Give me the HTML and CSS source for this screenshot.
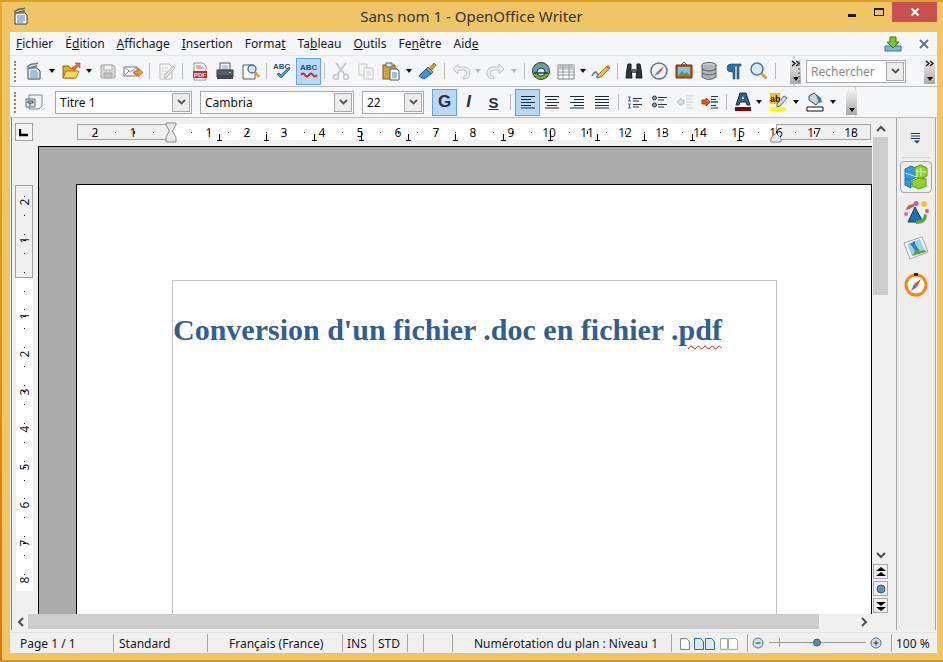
FILE: index.html
```html
<!DOCTYPE html>
<html lang="fr">
<head>
<meta charset="utf-8">
<title>Sans nom 1 - OpenOffice Writer</title>
<link rel="stylesheet" href="styles.css">
</head>
<body>
<div class="window">
  <header class="titlebar">
    <div class="app-icon">
      <svg width="16" height="18" viewBox="0 0 16 18"><path d="M2 6h10l2 2v9H2z" fill="#fff" stroke="#2b3a4a"/><path d="M4 9h8M4 11h8M4 13h8M4 15h6" stroke="#3b7fc4"/><path d="M1 5q5-4 9-3l2-1M2 7q5-3 10-3" fill="none" stroke="#5a6a78" stroke-width="1.5"/></svg>
    </div>
    <div class="title">Sans nom 1 - OpenOffice Writer</div>
    <div class="controls">
      <span class="ctl-min"></span>
      <span class="ctl-max"></span>
      <span class="ctl-close"><svg width="10" height="10" viewBox="0 0 10 10"><path d="M1.5 1.5l7 7M8.5 1.5l-7 7" stroke="#fff" stroke-width="2"/></svg></span>
    </div>
  </header>

  <div class="client">
    <nav class="menubar">
      <span><u>F</u>ichier</span><span>É<u>d</u>ition</span><span><u>A</u>ffichage</span><span><u>I</u>nsertion</span><span>Forma<u>t</u></span><span>Ta<u>b</u>leau</span><span><u>O</u>utils</span><span>Fe<u>n</u>être</span><span>Aid<u>e</u></span>
      <div class="menu-right">
        <svg width="18" height="16" viewBox="0 0 18 16"><path d="M1 10h16v5H1z" fill="#7fb2dd" stroke="#3d6f9a"/><path d="M6 1h6v5h3l-6 6-6-6h3z" fill="#7cc22e" stroke="#3f7f12"/></svg>
        <svg class="doc-close" width="10" height="10" viewBox="0 0 10 10"><path d="M1 1l8 8M9 1l-8 8" stroke="#6b7680" stroke-width="2"/></svg>
      </div>
    </nav>

    <div class="toolbar">
      <div class="tb-main">
        <i class="grip"></i>
        <button class="ic"><svg width="20" height="20" viewBox="0 0 20 20"><path d="M4 7h9l3 3v8H4z" fill="#fff" stroke="#2b3a4a"/><path d="M6 10h7M6 12h8M6 14h8M6 16h8" stroke="#3b7fc4"/><path d="M3 6q5-4 9-3l2-1M4 8q5-3 9-3" fill="none" stroke="#6d7a86" stroke-width="1.5"/></svg></button>
        <button class="dd"><b></b></button>
        <button class="ic"><svg width="20" height="20" viewBox="0 0 20 20"><path d="M2 5h6l1 2h5v10H2z" fill="#e9a92c" stroke="#8f6410"/><path d="M2 17l3-7h13l-3 7z" fill="#fbd55c" stroke="#a87a14"/><path d="M11 7l5-4-2-1h5v5l-1.500-2-4 4z" fill="#ee6b2a" stroke="#b3431a" stroke-width=".6"/></svg></button>
        <button class="dd"><b></b></button>
        <button class="ic off"><svg width="20" height="20" viewBox="0 0 20 20"><path d="M3 4h12l2 2v11H3z" fill="#d8d8d8" stroke="#9a9a9a"/><path d="M6 4h8v5H6z" fill="#f2f2f2" stroke="#a8a8a8"/><path d="M6 12h8v5H6z" fill="#bcbcbc" stroke="#a0a0a0"/></svg></button>
        <button class="ic"><svg width="22" height="20" viewBox="0 0 22 20"><path d="M2 6h13v9H2z" fill="#fdfdfd" stroke="#6a7580"/><path d="M2 6l6.500 5L15 6M2 15l5-5M15 15l-4-4" fill="none" stroke="#8b95a0"/><path d="M12 10h4V7l5 4.500L16 16v-3h-4z" fill="#f0a12b" stroke="#a8660e" stroke-width=".8"/></svg></button>
        <i class="sep"></i>
        <button class="ic off"><svg width="20" height="20" viewBox="0 0 20 20"><path d="M4 3h9l3 3v12H4z" fill="#f6f6f6" stroke="#b5b5b5"/><path d="M6 7h6M6 10h6M6 13h4" stroke="#cfcfcf"/><path d="M9 14l8-9 2 2-8 9-3 1z" fill="#e2e2e2" stroke="#b0b0b0"/></svg></button>
        <i class="sep sep-wide"></i>
        <button class="ic"><svg width="20" height="20" viewBox="0 0 20 20"><path d="M4 2h9l3 3v14H4z" fill="#fff" stroke="#8b95a0"/><path d="M6 5h5M6 7h8" stroke="#d24a3f"/><path d="M3 10h14v7H3z" fill="#d81e1e"/><text x="10" y="16" class="pdf-t">PDF</text></svg></button>
        <button class="ic"><svg width="20" height="20" viewBox="0 0 20 20"><path d="M5 2h10v7H5z" fill="#fff" stroke="#4a5660"/><path d="M7 5h6M7 7h6" stroke="#6b9ac9"/><path d="M2 9h16v7H2z" fill="#56616b" stroke="#2f3840"/><path d="M2 14h16v4H2z" fill="#3e4850"/><path d="M14 11h2v1h-2z" fill="#8fdc3a"/></svg></button>
        <button class="ic"><svg width="20" height="20" viewBox="0 0 20 20"><path d="M3 4h9l3 3v11H3z" fill="#fff" stroke="#4f5b66"/><circle cx="12" cy="8" r="4" fill="#cfe6f7" stroke="#3f6f9a" stroke-width="1.300"/><path d="M15 11l4 5" stroke="#d29a26" stroke-width="2.400"/></svg></button>
        <i class="sep"></i>
        <button class="ic"><svg width="20" height="20" viewBox="0 0 20 20"><text x="0" y="8" class="abc-t">ABC</text><path d="M4 13l4 4 9-9-1-2-8 8-2-2z" fill="#4d94d9" stroke="#1f5f9e" stroke-width=".8"/></svg></button>
        <button class="ic on toggle"><svg width="20" height="20" viewBox="0 0 20 20"><text x="1" y="9" class="abc-t">ABC</text><path d="M2 14q2-3 4 0t4 0 4 0 4 0" fill="none" stroke="#d6221f" stroke-width="2"/></svg></button>
        <i class="sep"></i>
        <button class="ic off"><svg width="20" height="20" viewBox="0 0 20 20"><path d="M5 2l9 12M15 2L6 14" stroke="#bfc4c8" stroke-width="2"/><circle cx="5" cy="16" r="2.500" fill="none" stroke="#bfc4c8" stroke-width="1.500"/><circle cx="15" cy="16" r="2.500" fill="none" stroke="#bfc4c8" stroke-width="1.500"/></svg></button>
        <button class="ic off"><svg width="20" height="20" viewBox="0 0 20 20"><path d="M3 3h8v11H3z" fill="#f6f6f6" stroke="#c2c2c2"/><path d="M8 7h9v11H8z" fill="#f6f6f6" stroke="#c2c2c2"/><path d="M10 10h5M10 12h5M10 14h5" stroke="#d0d0d0"/></svg></button>
        <button class="ic"><svg width="20" height="20" viewBox="0 0 20 20"><path d="M2 4h12v14H2z" fill="#d9a13a" stroke="#7e5a16"/><path d="M5 2h6v4H5z" fill="#dfe4e8" stroke="#5a6670"/><path d="M9 8h7l2 2v9H9z" fill="#fff" stroke="#3f5a76"/><path d="M11 12h5M11 14h5M11 16h5" stroke="#3b7fc4"/></svg></button>
        <button class="dd dd-w"><b></b></button>
        <button class="ic"><svg width="20" height="20" viewBox="0 0 20 20"><path d="M11 8l5-6 2 2-5 6z" fill="#e0a526" stroke="#94690f"/><path d="M10 6l5 5-2 2-5-5z" fill="#8aa0b3" stroke="#4a5a68"/><path d="M8 8l5 5-7 5-5-3z" fill="#3f8fdb" stroke="#1c5c9c"/></svg></button>
        <i class="sep"></i>
        <button class="ic off"><svg width="20" height="20" viewBox="0 0 20 20"><path d="M7 3L2 8l5 5V9h5q4 0 4 3t-4 4v2q7 0 7-6t-7-6H7z" fill="#ececec" stroke="#bcbcbc"/></svg></button>
        <button class="dd off-dd"><b></b></button>
        <button class="ic off"><svg width="20" height="20" viewBox="0 0 20 20"><path d="M13 3l5 5-5 5V9H8q-4 0-4 3t4 4v2q-7 0-7-6t7-6h5z" fill="#ececec" stroke="#bcbcbc"/></svg></button>
        <button class="dd dd-w off-dd"><b></b></button>
        <i class="sep"></i>
        <button class="ic"><svg width="20" height="20" viewBox="0 0 20 20"><circle cx="10" cy="10" r="8.500" fill="#6fb13a" stroke="#2d3a42"/><path d="M2 7q8-7 16 0l-2 3H4z" fill="#5b9bd5"/><circle cx="10" cy="11" r="4" fill="#dfe8ee" stroke="#2d3a42"/><path d="M3 12h14" stroke="#2d3a42" stroke-width="1.500"/></svg></button>
        <button class="ic"><svg width="20" height="20" viewBox="0 0 20 20"><path d="M2 4h16v14H2z" fill="#fff" stroke="#77818b"/><path d="M2 4h16v3H2z" fill="#b9c2ca"/><path d="M2 8h16M2 11h16M2 14h16M7 4v14M13 4v14" stroke="#8c98a3"/></svg></button>
        <button class="dd dd-n"><b></b></button>
        <button class="ic"><svg width="20" height="20" viewBox="0 0 20 20"><path d="M1 15q3-6 5-3t-1 4" fill="none" stroke="#3f86d0" stroke-width="1.500"/><path d="M7 14l9-9 3 2-9 9-4 1z" fill="#f0c13a" stroke="#a86f12"/><path d="M15 6l2-2 2 2-2 2z" fill="#e8606a"/></svg></button>
        <i class="sep"></i>
        <button class="ic"><svg width="20" height="20" viewBox="0 0 20 20"><path d="M3 8l1-5h3v5l1 9H2zM17 8l-1-5h-3v5l-1 9h6z" fill="#30363c" stroke="#15191c"/><path d="M8 8h4v4H8z" fill="#5c666e"/></svg></button>
        <button class="ic"><svg width="20" height="20" viewBox="0 0 20 20"><circle cx="10" cy="10" r="8" fill="#f3f5f6" stroke="#67727c" stroke-width="1.500"/><path d="M15 5l-4 7-2-2z" fill="#e04545"/><path d="M5 15l4-5 2 2z" fill="#3f80cc"/></svg></button>
        <button class="ic"><svg width="20" height="20" viewBox="0 0 20 20"><path d="M10 1l3 3H7z" fill="none" stroke="#7a5a33"/><path d="M2 4h16v13H2z" fill="#b5571b" stroke="#6f3410"/><path d="M4 6h12v9H4z" fill="#7fc2ea"/><path d="M4 15l4-5 3 3 2-2 3 4z" fill="#5c9c2c"/></svg></button>
        <button class="ic"><svg width="20" height="20" viewBox="0 0 20 20"><ellipse cx="10" cy="4" rx="7" ry="2.500" fill="#c8ccd0" stroke="#5a6268"/><path d="M3 4v12q7 5 14 0V4" fill="#aeb3b8" stroke="#5a6268"/><path d="M3 8q7 4 14 0M3 12q7 4 14 0" fill="none" stroke="#5a6268"/></svg></button>
        <button class="ic"><svg width="20" height="20" viewBox="0 0 20 20"><path d="M9 3H7a4 4 0 0 0 0 8h2v7h2V5h2v13h2V5h2V3z" fill="#2f6f9f" stroke="#1c4a6e" stroke-width=".6"/></svg></button>
        <button class="ic"><svg width="20" height="20" viewBox="0 0 20 20"><circle cx="8" cy="8" r="6" fill="#d6ebfa" stroke="#47789f" stroke-width="1.500"/><path d="M12.500 12.500l5 5" stroke="#d9a02a" stroke-width="2.800"/></svg></button>
        <i class="sep"></i>
        <button class="more">
          <svg width="10" height="8" viewBox="0 0 10 8"><path d="M1 1l3 2.500L1 6M5 1l3 2.500L5 6" fill="none" stroke="#111" stroke-width="1.300"/></svg>
          <b></b>
        </button>
      </div>
      <div class="tb-search">
        <i class="grip"></i>
        <div class="combo combo-search"><span class="ph">Rechercher</span><em><svg width="9" height="6" viewBox="0 0 9 6"><path d="M1 1l3.500 3.500L8 1" fill="none" stroke="#555" stroke-width="1.800"/></svg></em></div>
        <button class="more more-end">
          <svg width="10" height="8" viewBox="0 0 10 8"><path d="M1 1l3 2.500L1 6M5 1l3 2.500L5 6" fill="none" stroke="#111" stroke-width="1.300"/></svg>
          <b></b>
        </button>
      </div>
    </div>

    <div class="toolbar">
      <div class="tb-format">
        <i class="grip"></i>
        <button class="ic"><svg width="20" height="20" viewBox="0 0 20 20"><path d="M5 3h13v11l-3 3H5z" fill="#f4f4f4" stroke="#7c8892"/><path d="M2 7h9v8H2z" fill="#dfe4e8" stroke="#616d77"/><path d="M4 9h5v2H4zM6 11v3" fill="none" stroke="#3d4850"/></svg></button>
        <div class="combo combo-style"><span>Titre 1</span><em><svg width="9" height="6" viewBox="0 0 9 6"><path d="M1 1l3.500 3.500L8 1" fill="none" stroke="#555" stroke-width="1.800"/></svg></em></div>
        <div class="combo combo-font"><span>Cambria</span><em><svg width="9" height="6" viewBox="0 0 9 6"><path d="M1 1l3.500 3.500L8 1" fill="none" stroke="#555" stroke-width="1.800"/></svg></em></div>
        <div class="combo combo-size"><span>22</span><em><svg width="9" height="6" viewBox="0 0 9 6"><path d="M1 1l3.500 3.500L8 1" fill="none" stroke="#555" stroke-width="1.800"/></svg></em></div>
        <button class="ic on letter bold">G</button>
        <button class="ic letter ital">I</button>
        <button class="ic letter und">S</button>
        <i class="sep"></i>
        <button class="ic on al-left"><svg width="16" height="14" viewBox="0 0 16 14"><path d="M1 1.500h14M1 4.500h10M1 7.500h14M1 10.500h10M1 13h14" stroke="#1c2a36"/></svg></button>
        <button class="ic"><svg width="16" height="14" viewBox="0 0 16 14"><path d="M1 1.500h14M3 4.500h10M1 7.500h14M3 10.500h10M1 13h14" stroke="#1c2a36"/></svg></button>
        <button class="ic"><svg width="16" height="14" viewBox="0 0 16 14"><path d="M1 1.500h14M5 4.500h10M1 7.500h14M5 10.500h10M1 13h14" stroke="#1c2a36"/></svg></button>
        <button class="ic"><svg width="16" height="14" viewBox="0 0 16 14"><path d="M1 1.500h14M1 4.500h14M1 7.500h14M1 10.500h14M1 13h14" stroke="#1c2a36"/></svg></button>
        <i class="sep"></i>
        <button class="ic"><svg width="16" height="14" viewBox="0 0 16 14"><path d="M1 2h3M2.500 2v4M1 6h3M1 9h3M2.500 9v4M1 13h3" stroke="#2f74b5"/><path d="M6 3.500h9M6 6h6M6 9.500h9M6 12h6" stroke="#2a3640"/></svg></button>
        <button class="ic"><svg width="16" height="14" viewBox="0 0 16 14"><circle cx="2.500" cy="3" r="2" fill="#7ba7cf" stroke="#2a3640"/><circle cx="2.500" cy="10" r="2" fill="#7ba7cf" stroke="#2a3640"/><path d="M6 2.500h9M6 5h6M6 9.500h9M6 12h6" stroke="#2a3640"/></svg></button>
        <button class="ic off"><svg width="18" height="14" viewBox="0 0 18 14"><path d="M1 7l4-4v2h3v4H5v2z" fill="#dcdcdc" stroke="#bdbdbd"/><path d="M10 1h7M10 4h5M10 7h7M10 10h5M10 13h7" stroke="#c8c8c8"/></svg></button>
        <button class="ic"><svg width="18" height="14" viewBox="0 0 18 14"><path d="M9 7L5 3v2H1v4h4v2z" fill="#e8591d" stroke="#a83410"/><path d="M10 1.500h7M10 4.500h5M10 10.500h5M10 13h7" stroke="#2a3640"/><path d="M10 7h7" stroke="#2f86d0" stroke-width="2"/></svg></button>
        <i class="sep"></i>
        <button class="ic w-font"><svg width="20" height="20" viewBox="0 0 20 20"><path d="M7 1h6l4 12h-3l-1-3H7l-1 3H3z" fill="#2f5f8a" stroke="#12324e"/><path d="M9 7h2l-1-3z" fill="#fff"/><path d="M2 15h16v4H2z" fill="#800000"/></svg></button>
        <button class="dd dd-x"><b></b></button>
        <button class="ic w-hi"><svg width="20" height="20" viewBox="0 0 20 20"><path d="M2 1h10v11H2z" fill="#f1c40f"/><text x="2" y="10" class="ab-t">ab</text><path d="M9 12l7-8 3 2-7 8-3 1z" fill="#d8dde2" stroke="#5a6670"/><path d="M2 15h16v4H2z" fill="#ffff00"/></svg></button>
        <button class="dd"><b></b></button>
        <button class="ic"><svg width="20" height="20" viewBox="0 0 20 20"><path d="M4 4l5-3 7 6-5 6-7-5z" fill="#cdd3d8" stroke="#39454f"/><path d="M11 3q5 1 6 7l-3 1z" fill="#2f7fb8"/><path d="M2 15h16v4H2z" fill="#fff" stroke="#111"/></svg></button>
        <button class="dd dd-w"><b></b></button>
        <button class="more more-2"><b></b></button>
      </div>
    </div>

    <div class="work">
      <div class="editor">
        <div class="ruler-top">
          <div class="corner"><svg width="10" height="9" viewBox="0 0 10 9"><path d="M1 1v6h8" fill="none" stroke="#000" stroke-width="2.400"/></svg></div>
          <svg class="hruler" width="794" height="20" viewBox="0 0 794 20">
            <rect x="0" y="1" width="794" height="16" fill="#fff"/>
            <rect x=".5" y="1.500" width="93" height="15" fill="#f0f0f0" stroke="#a0a0a0"/>
            <rect x="699.500" y="1.500" width="94" height="15" fill="#f0f0f0" stroke="#a0a0a0"/>
            <g class="ticks">
              <line x1="19" x2="790" y1="9.500" y2="9.500" stroke-dasharray="1 17.900" stroke-dashoffset="0"/>
              <line x1="18" x2="790" y1="9" y2="9" class="half" stroke-dasharray="1 36.800" stroke-dashoffset="-1"/>
              <line x1="142" x2="700" y1="14" y2="14" class="stem" stroke-dasharray="1 46.250"/>
              <line x1="140" x2="700" y1="17.500" y2="17.500" stroke-dasharray="5 42.250"/>
            </g>
            <g class="rnum">
              <text x="18" y="13.500">2</text><text x="56" y="13.500">1</text><text x="132" y="13.500">1</text><text x="170" y="13.500">2</text><text x="207" y="13.500">3</text><text x="245" y="13.500">4</text><text x="283" y="13.500">5</text><text x="321" y="13.500">6</text><text x="359" y="13.500">7</text><text x="396" y="13.500">8</text><text x="434" y="13.500">9</text><text x="472" y="13.500">10</text><text x="510" y="13.500">11</text><text x="548" y="13.500">12</text><text x="585" y="13.500">13</text><text x="623" y="13.500">14</text><text x="661" y="13.500">15</text><text x="699" y="13.500">16</text><text x="737" y="13.500">17</text><text x="774" y="13.500">18</text>
            </g>
            <path d="M89 0h10v2l-3.500 6 3.500 6v5H89v-5l3.500-6L89 2z" fill="#e8e8e8" stroke="#8a8a8a"/>
            <path d="M694 19v-4l5-5 5 5v4z" fill="#e8e8e8" stroke="#8a8a8a"/>
          </svg>
        </div>
        <div class="scroll-v">
          <button class="sb-btn"><svg width="10" height="7" viewBox="0 0 10 7"><path d="M1 6l4-4 4 4" fill="none" stroke="#505050" stroke-width="2"/></svg></button>
          <div class="sb-thumb"></div>
          <div class="sb-fill"></div>
          <button class="sb-btn sb-down"><svg width="10" height="7" viewBox="0 0 10 7"><path d="M1 1l4 4 4-4" fill="none" stroke="#505050" stroke-width="2"/></svg></button>
          <button class="nav"><svg width="10" height="10" viewBox="0 0 10 10"><path d="M0 4l5-4 5 4zM0 9l5-4 5 4z" fill="#000"/></svg></button>
          <button class="nav"><svg width="10" height="10" viewBox="0 0 10 10"><circle cx="5" cy="5" r="4" fill="#5f8fb5" stroke="#3a5f7f"/></svg></button>
          <button class="nav"><svg width="10" height="10" viewBox="0 0 10 10"><path d="M0 1l5 4 5-4zM0 6l5 4 5-4z" fill="#000"/></svg></button>
        </div>
        <div class="ruler-left">
          <svg width="18" height="406" viewBox="0 0 18 406">
            <rect x="1" y="93" width="17" height="313" fill="#fff"/>
            <rect x=".5" y=".5" width="17" height="92" fill="#f0f0f0" stroke="#a0a0a0"/>
            <g class="ticks">
              <line x1="9.500" x2="9.500" y1="8" y2="400" stroke-dasharray="1 17.900" stroke-dashoffset="-3"/>
              <line x1="7" x2="10" y1="0" y2="0" class="vhalf"/>
            </g>
            <g class="vmarks">
              <path d="M8 55h3M8 131h3M8 206h3M8 282h3M8 358h3" stroke="#000"/>
              <path d="M8 17h3" stroke="none"/>
            </g>
            <g class="rnum">
              <text transform="translate(13.500 17) rotate(-90)">2</text>
              <text transform="translate(13.500 55) rotate(-90)">1</text>
              <text transform="translate(13.500 131) rotate(-90)">1</text>
              <text transform="translate(13.500 169) rotate(-90)">2</text>
              <text transform="translate(13.500 207) rotate(-90)">3</text>
              <text transform="translate(13.500 244) rotate(-90)">4</text>
              <text transform="translate(13.500 282) rotate(-90)">5</text>
              <text transform="translate(13.500 320) rotate(-90)">6</text>
              <text transform="translate(13.500 358) rotate(-90)">7</text>
              <text transform="translate(13.500 395) rotate(-90)">8</text>
            </g>
          </svg>
        </div>
        <div class="doc">
          <div class="page">
            <div class="textbox">
              <h1 class="heading">Conversion d'un fichier .doc en fichier .<span class="misspelt">pdf</span></h1>
            </div>
          </div>
        </div>
        <div class="scroll-h">
          <button class="sb-btn"><svg width="7" height="10" viewBox="0 0 7 10"><path d="M6 1L2 5l4 4" fill="none" stroke="#505050" stroke-width="2"/></svg></button>
          <div class="sbh-thumb"></div>
          <button class="sb-btn sb-right"><svg width="7" height="10" viewBox="0 0 7 10"><path d="M1 1l4 4-4 4" fill="none" stroke="#505050" stroke-width="2"/></svg></button>
        </div>
      </div>

      <aside class="sidebar">
        <div class="sb-menu"><svg width="12" height="12" viewBox="0 0 12 12"><path d="M1 1.500h9M1 4h9M1 6.500h9" stroke="#1e3a5a"/><path d="M4 8.500h6l-3 3z" fill="#1e3a5a"/></svg></div>
        <hr class="sb-rule">
        <div class="deck deck-on"><svg width="26" height="26" viewBox="0 0 26 26"><path d="M2 5l6-3 6 3v8l-6 3-6-3z" fill="#2f9be0" stroke="#1a6fa8"/><path d="M12 3l6-2 6 3v8l-6 3-6-3z" fill="#93d12f" stroke="#5f9a16"/><path d="M2 14l6 3v7l-6-3z" fill="#2f9be0" stroke="#1a6fa8"/><path d="M9 17l7-3 7 1v7l-7 3-7-3z" fill="#93d12f" stroke="#5f9a16"/><path d="M2 9l12 4M14 5v8M18 4v8M12 7l12 1" fill="none" stroke="#fff" stroke-opacity=".7"/></svg></div>
        <div class="deck"><svg width="26" height="26" viewBox="0 0 26 26"><path d="M5 22L12 7l8 15z" fill="#1f6fb3" stroke="#123f66"/><path d="M11 4q-7 0-8 6l4-1q1-2 4-2z" fill="#b8682a"/><path d="M13 20q8 1 8-6l3 1q0 9-11 9z" fill="#5aa53a"/><circle cx="13" cy="3.500" r="2.500" fill="#d24ec4"/><circle cx="21" cy="4" r="3" fill="#f3c537"/><circle cx="24" cy="11" r="2" fill="#e8517a"/><circle cx="3" cy="14" r="2" fill="#e95fb5"/></svg></div>
        <div class="deck"><svg width="26" height="26" viewBox="0 0 26 26"><path d="M1 7L19 1l6 15-18 7z" fill="#fff" stroke="#9aa3aa"/><path d="M4 8l13-5 5 12-13 5z" fill="#9bd0ee"/><path d="M9 20l5-8 3 3 5-1 1 2z" fill="#5da52f"/><path d="M7 8l5-3v3l4 6-4 1-3-5z" fill="#2f7fc1"/></svg></div>
        <div class="deck"><svg width="26" height="26" viewBox="0 0 26 26"><circle cx="13" cy="13" r="10" fill="#fdfdfd" stroke="#f08c14" stroke-width="3"/><path d="M18 7l-4 8-3-3z" fill="#e24b3f"/><path d="M8 19l3-7 3 3z" fill="#3d82c9"/><path d="M11 1h4v3h-4z" fill="#2a2f35"/></svg></div>
      </aside>
    </div>

    <footer class="status">
      <div class="st st-page">Page 1 / 1</div>
      <div class="st st-style">Standard</div>
      <div class="st st-lang">Français (France)</div>
      <div class="st st-ins">INS</div>
      <div class="st st-std">STD</div>
      <div class="st st-a"></div>
      <div class="st st-b"></div>
      <div class="st st-plan">Numérotation du plan : Niveau 1</div>
      <div class="st st-views">
        <svg width="60" height="14" viewBox="0 0 60 14"><path d="M1.500 2.500h6l3 3v8h-9z" fill="#fff" stroke="#7d8a96"/><path d="M15.500 2.500h6l3 3v8h-9zM26.500 2.500h6l3 3v8h-9z" fill="#dbe8f6" stroke="#2e6da4"/><path d="M41.500 2.500h7v11h-7zM49.500 2.500h7l2 2v9h-9z" fill="#fff" stroke="#a0a8b0"/></svg>
      </div>
      <div class="st st-zoom">
        <svg width="143" height="16" viewBox="0 0 143 16"><circle cx="10" cy="8" r="5" fill="#cfe0ef" stroke="#5a7288"/><path d="M7.500 8h5" stroke="#234"/><path d="M21 7.500h97" stroke="#9a9a9a"/><path d="M31.500 3v9" stroke="#9a9a9a"/><circle cx="69" cy="7.500" r="3.500" fill="#5f8aae" stroke="#3a5f7f"/><circle cx="128" cy="8" r="5" fill="#cfe0ef" stroke="#5a7288"/><path d="M125.500 8h5M128 5.500v5" stroke="#234"/></svg>
      </div>
      <div class="st st-pct">100 %</div>
    </footer>
  </div>
</div>
</body>
</html>
```

FILE: styles.css
```css
* { box-sizing: border-box; }
html, body { margin: 0; padding: 0; }
body { width: 943px; height: 662px; overflow: hidden; font: 12px "Noto Sans", sans-serif; color: #1a1a1a; }
button { padding: 0; margin: 0; border: 0; background: none; font: inherit; color: inherit; display: flex; align-items: center; justify-content: center; flex: none; }
svg { display: block; flex: none; }

.window {
  width: 943px; height: 662px; display: flex; flex-direction: column;
  background:
    linear-gradient(#d9a02c, #d9a02c) top left / 100% 2px no-repeat,
    linear-gradient(#c9982f, #c9982f) bottom left / 100% 2px no-repeat,
    linear-gradient(#e8a82a, #d9750f) top left / 2px 100% no-repeat,
    #efc566;
}

.titlebar { height: 32px; display: grid; grid-template-columns: 1fr auto 1fr; align-items: start; flex: none; }
.app-icon { padding: 7px 0 0 13px; }
.title { font-size: 15px; color: #333; padding-top: 6px; line-height: 20px; }
.controls { display: flex; justify-content: flex-end; align-items: flex-start; padding: 2px 6px 0 0; }
.ctl-min { width: 8px; height: 3px; background: #1c1c1c; margin: 12px 18px 0 0; }
.ctl-max { width: 10px; height: 8px; border: 1px solid #1c1c1c; border-top-width: 2px; margin: 6px 8px 0 0; }
.ctl-close { width: 45px; height: 20px; background: #c75050; display: flex; align-items: center; justify-content: center; }

.client { margin: 0 6px 0 10px; height: 621px; background: #f0f0f0; display: flex; flex-direction: column; flex: none; }

.menubar { height: 24px; background: #f5f6f7; border-bottom: 1px solid #e6e7e8; display: flex; align-items: center; gap: 12px; padding-left: 6px; flex: none; white-space: nowrap; color: #16161e; }
.menu-right { margin-left: auto; display: flex; align-items: center; padding-right: 8px; }
.doc-close { margin-left: 17px; }

.toolbar { height: 31px; background: #f5f6f7; border-bottom: 1px solid #bdbdbd; display: flex; align-items: center; flex: none; }
.tb-main { display: flex; align-items: center; width: 785px; height: 100%; padding-left: 4px; border-right: 2px solid #d0d0d0; }
.tb-search { display: flex; align-items: center; height: 100%; padding-left: 3px; flex: 1; }
.tb-format { display: flex; align-items: center; width: 846px; height: 100%; padding-left: 4px; border-right: 1px solid #d8d8d8; }

.grip { width: 2px; height: 21px; border-left: 2px dotted #85898d; margin-right: 5px; flex: none; }
.tb-search .grip { margin-right: 6px; }
.ic { width: 25px; height: 27px; }
.ic.off { opacity: .9; }
.on { background: #b8d8f5; border: 1px solid #62a2e4; }
.toggle { margin: 0 -1px 0 1px; }
.dd { width: 12px; height: 27px; }
.dd-w { width: 12px; }
.dd-n { width: 10px; }
.dd-x { width: 8px; }
.dd b, .more b { display: block; width: 0; height: 0; border: 3px solid transparent; border-top: 4px solid #111; border-bottom: 0; }
.off-dd { width: 10px; }
.off-dd b { border-top-color: #b5b5b5; }
.off-dd.dd-w { width: 12px; }
.sep { width: 1px; height: 16px; background: #b9b9b9; margin: 0 3px 0 4px; flex: none; }
.sep-wide { margin-right: 4px; }

.more { width: 11px; height: 25px; margin-left: 11px; flex-direction: column; justify-content: space-between; align-items: center; padding: 1px 0 3px; background: linear-gradient(#f2f2f2, #a9a9a9); }
.more-end { margin-left: 18px; }
.more-2 { margin-left: 7px; justify-content: flex-end; }

.combo { height: 23px; border: 1px solid #a8a8a8; background: #fff; display: flex; align-items: center; padding: 1px; flex: none; }
.combo span { flex: 1; padding-left: 3px; white-space: nowrap; color: #111; }
.combo em { width: 18px; height: 19px; background: #ececec; border: 1px solid #a8a8a8; display: flex; align-items: center; justify-content: center; }
.combo-style { width: 137px; margin-left: 9px; }
.combo-font { width: 154px; margin-left: 8px; }
.combo-size { width: 62px; margin-left: 8px; }
.combo-search { width: 100px; }
.combo .ph { color: #888; }

.letter { font-family: "Liberation Sans", sans-serif; font-size: 17px; color: #27323c; }
.bold { font-weight: 700; margin-left: 8px; }
.ital { font-style: italic; font-weight: 700; margin-left: -1px; }
.und { font-weight: 700; text-decoration: underline; font-size: 15px; }
.al-left { margin-left: 1px; margin-right: -1px; }
.w-font { width: 25px; }
.w-hi { margin-left: 2px; }

.pdf-t { font: 700 6px "Liberation Sans", sans-serif; fill: #fff; text-anchor: middle; }
.abc-t { font: 700 8px "Liberation Sans", sans-serif; fill: #1f4f7a; }
.ab-t { font: 700 9px "Liberation Sans", sans-serif; fill: #111; }

.work { display: flex; height: 514px; flex: none; }
.editor {
  width: 880px; height: 512px; margin-left: 1px; border-left: 1px solid #808080;
  display: grid; grid-template-columns: 26px 834px 16px; grid-template-rows: 28px 468px 16px;
}
.ruler-top { grid-column: 1 / 3; grid-row: 1; display: flex; align-items: flex-start; padding: 5px 0 0 3px; }
.corner { width: 18px; height: 18px; border: 1px solid #a0a0a0; background: #f4f4f4; display: flex; align-items: center; justify-content: center; margin-right: 44px; }
.hruler { overflow: visible; }
.ticks line { stroke: #000; shape-rendering: crispEdges; stroke-width: 1; }
.ticks .half { stroke-width: 3; }
.ticks .stem { stroke-width: 6; }
.vhalf { display: none; }
.rnum text { font: 12px "Noto Sans", sans-serif; fill: #16161e; text-anchor: middle; }
.vmarks path { shape-rendering: crispEdges; }

.ruler-left { grid-column: 1; grid-row: 2; padding: 39px 0 0 3px; overflow: hidden; }
.doc { grid-column: 2; grid-row: 2; background: #ababab; border-left: 1px solid #000; border-top: 1px solid #000; padding: 37px 0 0 37px; overflow: hidden; display: flex; }
.page { flex: 1; background: #fff; border: 1px solid #000; border-bottom: 0; padding: 95px 94px 0 95px; display: flex; }
.textbox { flex: 1; border: 1px solid #c0c0c0; border-bottom: 0; }
.heading { margin: 0; padding: 31px 0 0 0; font: 700 30px/36px "Liberation Serif", serif; color: #30608f; white-space: nowrap; border-left: 0; }
.misspelt { text-decoration: underline wavy #d82020 1px; text-underline-offset: 5px; }

.scroll-v { grid-column: 3; grid-row: 1 / 3; display: flex; flex-direction: column; padding: 1px 0 1px 1px; }
.sb-btn { height: 18px; width: 15px; flex: none; }
.sb-thumb { height: 158px; background: #cdcdcd; flex: none; }
.sb-fill { flex: 1; }
.sb-down { height: 12px; margin-bottom: 3px; }
.nav { width: 15px; height: 15px; border: 1px solid #a8a8a8; background: #efefef; margin-bottom: 2px; }
.nav:last-child { margin-bottom: 0; }

.scroll-h { grid-column: 1 / 4; grid-row: 3; display: flex; align-items: center; height: 15px; border-bottom: 0; }
.scroll-h .sb-btn { width: 16px; height: 15px; }
.sbh-thumb { width: 791px; height: 15px; background: #cdcdcd; }
.sb-right { margin-left: 37px; }

.sidebar { width: 40px; height: 512px; margin-left: 5px; background: #eeeeee; border: 1px solid #a6a6a6; border-width: 0 1px; display: flex; flex-direction: column; align-items: center; flex: none; }
.sb-menu { height: 39px; display: flex; align-items: center; justify-content: center; }
.sb-rule { width: 28px; margin: 0 0 3px; border: 0; border-top: 1px solid #d8d8d8; }
.deck { width: 32px; height: 32px; display: flex; align-items: center; justify-content: center; margin-bottom: 4px; }
.deck-on { border: 1px solid #aaa; border-radius: 4px; }

.status { height: 21px; display: flex; align-items: stretch; background: #f0f0f0; flex: none; white-space: nowrap; color: #16161e; border-top: 1px solid #e4e4e4; }
.st { border-right: 1px solid #a6a6a6; display: flex; align-items: center; flex: none; margin: 1px 0; }
.st-page { width: 104px; padding-left: 10px; }
.st-style { width: 94px; padding-left: 5px; }
.st-lang { width: 135px; padding-left: 21px; }
.st-ins { width: 31px; padding-left: 4px; }
.st-std { width: 34px; padding-left: 4px; }
.st-a { width: 16px; }
.st-b { width: 29px; }
.st-plan { width: 219px; padding-left: 21px; }
.st-views { width: 76px; padding-left: 7px; }
.st-zoom { width: 144px; }
.st-pct { border-right: 0; padding-left: 4px; }
```
